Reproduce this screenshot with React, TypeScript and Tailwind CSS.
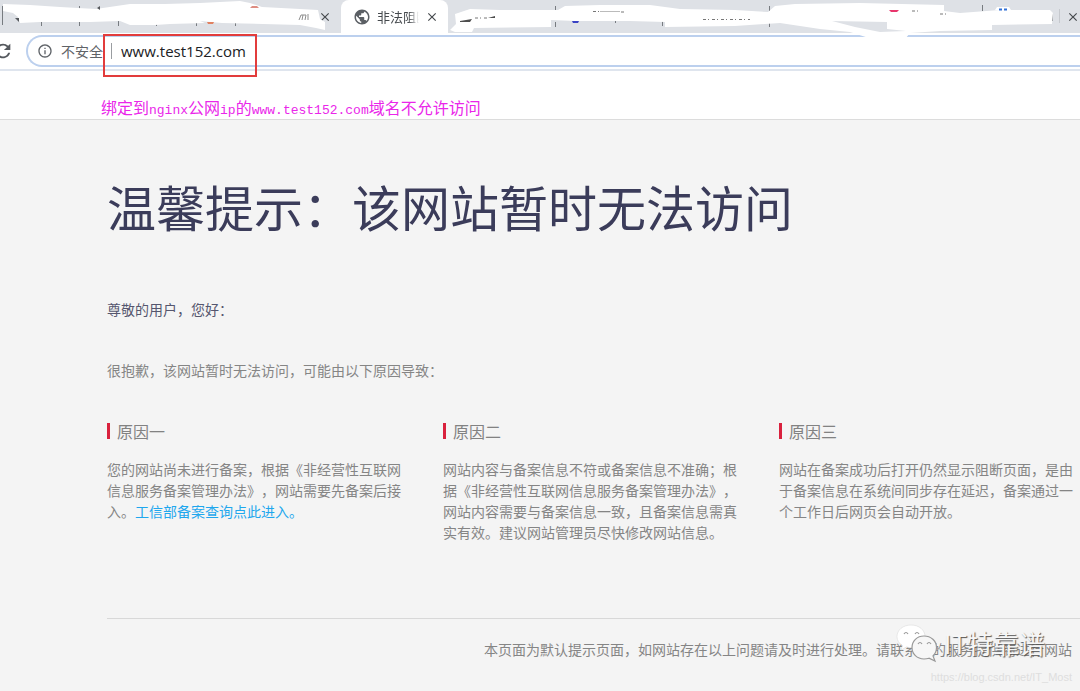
import React from 'react';
import { MdClose, MdInfoOutline, MdPublic, MdRefresh } from 'react-icons/md';

interface ReasonProps {
  title: string;
  children: React.ReactNode;
}

function Reason({ title, children }: ReasonProps) {
  return (
    <section>
      <h2 className="flex items-center gap-[7px] h-6 text-[16px] text-[#828282]">
        <span className="w-[3px] h-4 bg-[#d9213d]" />
        {title}
      </h2>
      <p className="mt-4 text-[14px] leading-[21px]">{children}</p>
    </section>
  );
}

// white marker strokes that hide the titles of the other tabs
function Scribbles() {
  return (
    <svg
      className="absolute left-0 top-0 z-10 pointer-events-none"
      width="1080"
      height="42"
      viewBox="0 0 1080 42"
      aria-hidden="true"
    >
      <g stroke="#777b80" strokeWidth="1">
        <path d="M2.5 6v19M79.500 6v4M41.500 21v5M79.500 21v5M118.500 21v5M156.500 21v5M196.500 21v5M235.500 21v5" />
        <path d="M555.500 6v4M555.500 22v5M615.500 20v3M662.500 21v5M769.500 6v5M769.500 22v5M876.500 9v3M876.500 22v5M982.500 5v6M1052.500 13v8" />
        <path d="M1059.500 9v14" stroke="#c6c9ce" />
      </g>
      <path
        fill="#fff"
        d="M3 4L30 5L60 7L96 9L130 4L165 4L200 3L240 1L250 3L262 7L300 9L318 10L320 19L325 22L325 30L316 28L300 25L222 23L200 21L205 23L170 24L155 25L130 25L120 21L90 22L40 22L20 23L18 17L13 13L3 11Z"
      />
      <path
        fill="#fff"
        d="M455 14L470 9L500 10L558 10L565 6L600 5L650 5L680 9L735 10L768 12L775 6L795 4L860 3L944 5L944 11L960 13L1000 10L1050 10L1053 13L1052 24L992 25L992 30L940 31L910 33L905 39H872L850 32L820 29L780 23L765 24L735 26L665 27L665 22L630 21L575 21L551 20L551 27L474 28L472 32L455 32L450 30L456 24Z"
      />
      <path fill="#dee1e6" d="M832 21L887 22L887 29L906 31L880 32L855 27Z" />
      <path d="M250 8L252 6H257L259 8Z" fill="#dd8d82" />
      <path d="M207 22h7l-1 2h-5z" fill="#e08161" />
      <path d="M15 18h4v4zM97 8l3-2v4z" fill="#55585c" />
      <path d="M460 21l12-2-2 3h-10zM488 18l7-2v2z" fill="#4d4d4d" />
      <path
        d="M475 18h12M593 11.500h6M621 12h5M703 19.500h47M940 14h6M912 11h6"
        stroke="#777"
        strokeDasharray="3 2 1 3"
      />
      <path d="M600 11.500h20" stroke="#bbb" />
      <path d="M572 21h7l-1 2h-5z" fill="#3942c4" />
      <path d="M889 10h10l-2 2h-6z" fill="#e8356c" />
      <path d="M995 10l2-3h12l2 3z" fill="#fff" />
      <path d="M999 9.500h3M1004 9.500h3" stroke="#2f6fd6" strokeWidth="2" />
      <path d="M299 20l2-5h2l-1 5M303 15l3 0-1 5M308 14v6" fill="none" stroke="#8d8d8d" />
    </svg>
  );
}

function TabStrip() {
  return (
    <div className="relative flex h-[33px] bg-[#dee1e6] text-[#45494d]">
      <div className="flex items-center justify-end w-[341px] pr-[9px]">
        <button aria-label="关闭">
          <MdClose size={14} />
        </button>
      </div>
      <div className="flex items-center w-[107px] pl-3 pr-[9px] bg-white rounded-t-lg">
        <MdPublic size={18} className="shrink-0 text-[#5b5f64]" />
        <span className="w-[42px] ml-[6px] overflow-hidden whitespace-nowrap text-[13px] [mask-image:linear-gradient(to_right,#000_75%,transparent)]">
          非法阻断
        </span>
        <button aria-label="关闭" className="ml-auto">
          <MdClose size={14} />
        </button>
      </div>
      <div className="flex flex-1 items-center justify-end">
        <button aria-label="关闭">
          <MdClose size={14} />
        </button>
      </div>
      <Scribbles />
    </div>
  );
}

function AddressBar() {
  return (
    <div className="relative flex items-center h-[38px] border-b-2 border-[#dfe5ee]">
      <button aria-label="重新加载" className="-ml-2 text-[#55595e]">
        <MdRefresh size={22} />
      </button>
      <div className="flex flex-1 items-center h-8 ml-3 pl-[9px] border-2 border-r-0 border-[#bcd0ee] rounded-l-full">
        <MdInfoOutline size={16} className="shrink-0 text-[#5f6368]" />
        <label htmlFor="address" className="w-[50px] ml-2 text-[14px] whitespace-nowrap text-[#5f6368]">
          不安全
        </label>
        <input
          id="address"
          type="text"
          defaultValue="www.test152.com"
          className="flex-1 min-w-0 h-4 pl-[9px] border-l border-[#9a9da1] outline-none font-['Open_Sans','Noto_Sans_CJK_SC',sans-serif] text-[15px] text-[#202124]"
        />
      </div>
      {/* red frame drawn around the domain */}
      <div className="absolute left-[103px] top-px w-[154px] h-[43px] border-2 border-[#e23c3c] pointer-events-none" />
    </div>
  );
}

function Latin({ children }: { children: string }) {
  return <span className="font-['Liberation_Mono',monospace] text-[13px]">{children}</span>;
}

function Watermark() {
  return (
    <div className="absolute right-2 top-[617px] pointer-events-none">
      <div className="flex items-center gap-[6px] h-[51px] pr-[27px]">
        <svg width="42" height="40" viewBox="0 0 42 40" aria-hidden="true">
          <path
            d="M15 2C7 2 1 7 1 13.500c0 4 2 7 5.500 9L5 27l5.500-3c1.500.5 3 .6 5 .6C23 24.600 29 20 29 13.500S23 2 15 2z"
            fill="#fff"
            stroke="#dcdcdc"
            strokeWidth="0.6"
          />
          <path
            d="M28 13c-7 0-12 5-12 11.500S21 36 28 36c2 0 3.500-.3 5-.8l6 2.800-2-5c2-2 3.500-5 3.500-8.500C40.500 18 35 13 28 13z"
            fill="#f7f7f7"
            stroke="#999"
            strokeWidth="1.200"
          />
          <path
            d="M8 11q2-3 4 0M19 11q2-3 4 0M22 21q2-3 4 0M31 21q2-3 4 0"
            fill="none"
            stroke="#999"
            strokeWidth="1.200"
          />
        </svg>
        <span className="text-[26px] leading-[30px] text-[#f6f6f6] [text-shadow:1px_1px_1px_#555]">
          IT特靠谱
        </span>
      </div>
      <div className="text-right font-['Liberation_Sans',sans-serif] text-[11px] leading-[18px] text-[#dedede]">
        https://blog.csdn.net/IT_Most
      </div>
    </div>
  );
}

export default function App() {
  return (
    <div className="relative flex flex-col min-h-screen overflow-hidden bg-[#f4f4f4] font-['Noto_Sans_CJK_SC',sans-serif] [text-spacing-trim:space-all]">
      <header className="bg-white border-b border-[#dcdcdc]">
        <TabStrip />
        <AddressBar />
        <p className="h-12 pl-[101px] pt-6 text-[16px] leading-6 text-[#ea26ea]">
          绑定到<Latin>nginx</Latin>公网<Latin>ip</Latin>的<Latin>www.test152.com</Latin>
          域名不允许访问
        </p>
      </header>

      <main className="pl-[107px] pt-[58px] text-[14px] leading-[21px] text-[#858585]">
        <h1 className="text-[49px] leading-[56px] text-[#3b3c5a]">温馨提示：该网站暂时无法访问</h1>
        <p className="mt-[65px] text-[#55566e]">尊敬的用户，您好：</p>
        <p className="mt-10">很抱歉，该网站暂时无法访问，可能由以下原因导致：</p>

        <div className="grid grid-cols-[repeat(3,300px)] gap-9 mt-[38px]">
          <Reason title="原因一">
            您的网站尚未进行备案，根据《非经营性互联网信息服务备案管理办法》，网站需要先备案后接入。
            <a href="#" className="text-[#1ea7ee]">工信部备案查询点此进入。</a>
          </Reason>
          <Reason title="原因二">
            网站内容与备案信息不符或备案信息不准确；根据《非经营性互联网信息服务备案管理办法》，网站内容需要与备案信息一致，且备案信息需真实有效。建议网站管理员尽快修改网站信息。
          </Reason>
          <Reason title="原因三">
            网站在备案成功后打开仍然显示阻断页面，是由于备案信息在系统间同步存在延迟，备案通过一个工作日后网页会自动开放。
          </Reason>
        </div>

        <footer className="mt-[75px] pt-5 pl-[377px] border-t border-[#d8d8d8] whitespace-nowrap">
          本页面为默认提示页面，如网站存在以上问题请及时进行处理。请联系您的服务提供商进行网站
        </footer>
      </main>

      <Watermark />
    </div>
  );
}
